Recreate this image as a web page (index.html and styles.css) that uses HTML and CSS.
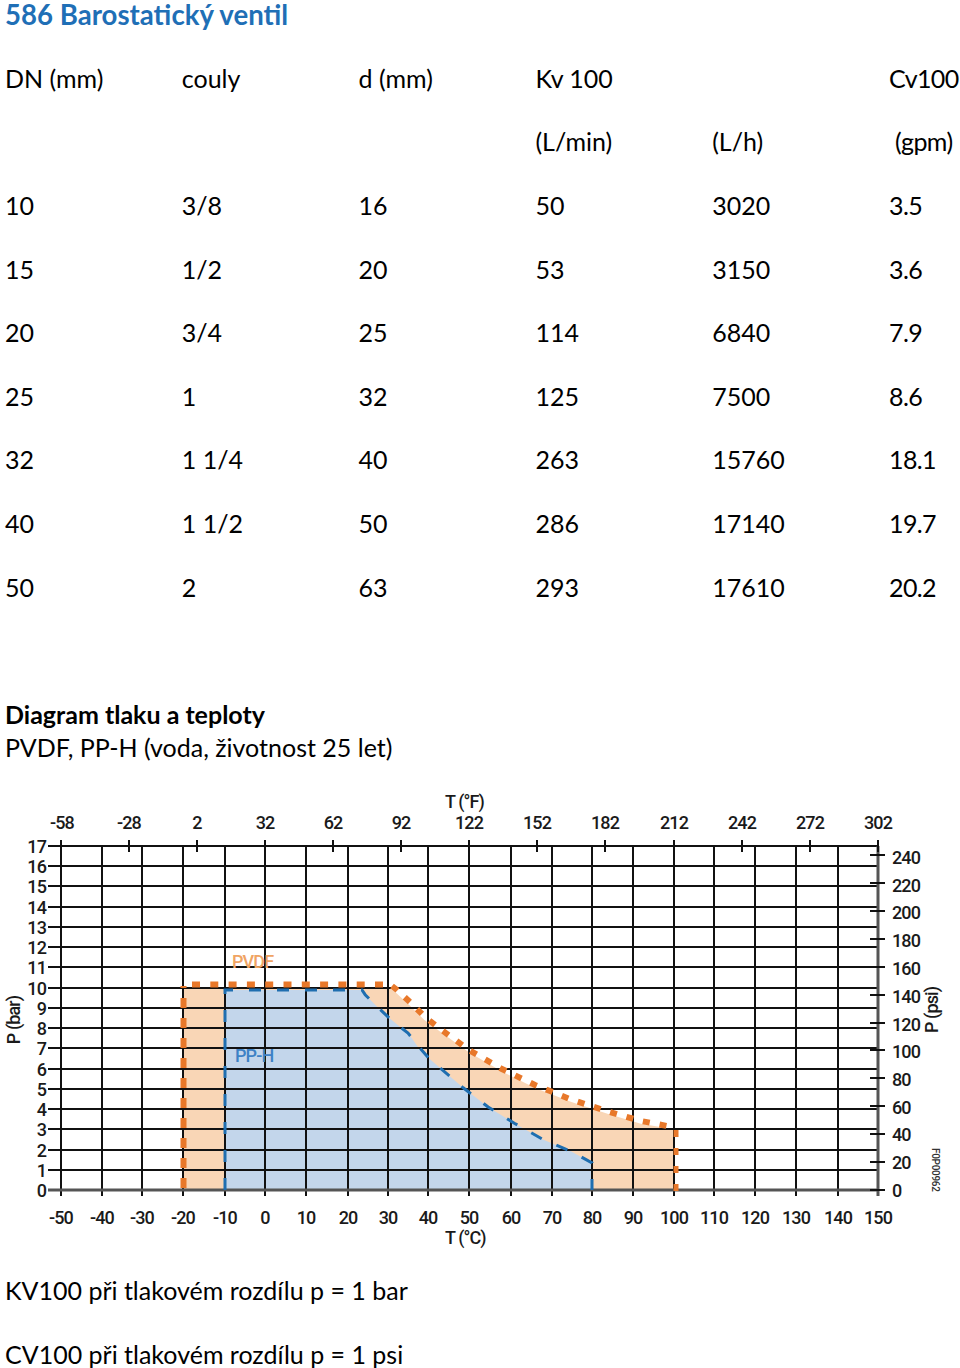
FILE: index.html
```html
<!DOCTYPE html>
<html lang="cs">
<head>
<meta charset="utf-8">
<title>586 Barostatický ventil</title>
<link rel="stylesheet" href="styles.css">
</head>
<body>
<h1 class="title">586 Barostatický ventil</h1>

<table class="specs">
  <colgroup><col><col><col><col><col><col></colgroup>
  <tr><td>DN (mm)</td><td>couly</td><td>d (mm)</td><td>Kv 100</td><td></td><td>Cv100</td></tr>
  <tr><td></td><td></td><td></td><td>(L/min)</td><td>(L/h)</td><td class="shift">(gpm)</td></tr>
  <tr><td>10</td><td>3/8</td><td>16</td><td>50</td><td>3020</td><td>3.5</td></tr>
  <tr><td>15</td><td>1/2</td><td>20</td><td>53</td><td>3150</td><td>3.6</td></tr>
  <tr><td>20</td><td>3/4</td><td>25</td><td>114</td><td>6840</td><td>7.9</td></tr>
  <tr><td>25</td><td>1</td><td>32</td><td>125</td><td>7500</td><td>8.6</td></tr>
  <tr><td>32</td><td>1 1/4</td><td>40</td><td>263</td><td>15760</td><td>18.1</td></tr>
  <tr><td>40</td><td>1 1/2</td><td>50</td><td>286</td><td>17140</td><td>19.7</td></tr>
  <tr><td>50</td><td>2</td><td>63</td><td>293</td><td>17610</td><td>20.2</td></tr>
</table>

<div class="diagram-head">
  <p class="diagram-title">Diagram tlaku a teploty</p>
  <p class="diagram-sub">PVDF, PP-H (voda, životnost 25 let)</p>
</div>

<svg class="chart" width="960" height="470" viewBox="0 785 960 470" xmlns="http://www.w3.org/2000/svg">
  <!-- fills -->
  <polygon class="fill-pvdf" points="183,1190 183,987 388,987 396,992.7 410,1005.8 424.4,1020 440.7,1032.1 469.3,1052.4 502,1071.6 534.7,1087.8 571.4,1102 608.3,1114.1 640.9,1123.8 674,1129.3 674,1190"/>
  <polygon class="fill-pph" points="225,1190 225,990 362,990 365.2,994.7 375.4,1004.9 387.7,1016.7 399.9,1026.7 408,1032.7 417.8,1046.7 428.5,1057.9 463.2,1087.8 488.1,1107 514.3,1123.2 542.9,1139.4 571.4,1151.5 592,1162.9 592,1190"/>

  <!-- grid -->
  <path class="grid" d="M48 1170H878M48 1150H878M48 1129H878M48 1109H878M48 1089H878M48 1069H878M48 1048H878M48 1028H878M48 1008H878M48 988H878M48 967H878M48 947H878M48 927H878M48 907H878M48 886H878M48 866H878M48 846H878"/>
  <path class="grid" d="M61 846V1196M102 846V1196M142 846V1196M183 846V1196M225 846V1196M265 846V1196M306 846V1196M348 846V1196M388 846V1196M428 846V1196M469 846V1196M511 846V1196M552 846V1196M592 846V1196M633 846V1196M674 846V1196M714 846V1196M755 846V1196M796 846V1196M838 846V1196"/>
  <path class="axis" d="M48 1190H878M878 846V1196"/>
  <!-- top °F ticks -->
  <path class="grid" d="M61 840V852M129 840V852M197 840V852M265 840V852M333 840V852M401 840V852M469 840V852M537 840V852M605 840V852M674 840V852M742 840V852M810 840V852M878 840V852"/>
  <!-- right psi ticks -->
  <path class="grid" d="M870 1190H885M870 1162H885M870 1134H885M870 1106H885M870 1078H885M870 1050H885M870 1023H885M870 995H885M870 967H885M870 939H885M870 911H885M870 883H885M870 855H885"/>

  <!-- curves -->
  <path class="dot-pvdf-v" d="M183.5 1188V986"/>
  <path class="dot-pvdf-h" d="M192 984.5H390"/>
  <path class="dot-pvdf-c" d="M392 986 L397 990 L411 1003 L425 1017 L441 1029.5 L469 1050 L502 1069 L535 1085 L571 1099.5 L608 1111.5 L641 1121 L670 1126.5"/>
  <path class="dot-pvdf-r" d="M676 1130V1192"/>
  <path class="dash-pph" d="M225 1190V990H362 L365.2 994.7 L375.4 1004.9 L387.7 1016.7 L399.9 1026.7 L408 1033 L417.8 1045.5 L428.5 1057.9 L463.2 1087.8 L488.1 1107 L514.3 1123.2 L542.9 1139.4 L571.4 1151.5 L592 1162.9 V1190"/>

  <text class="lbl-pvdf" x="232" y="968">PVDF</text>
  <text class="lbl-pph" x="235" y="1062">PP-H</text>

  <!-- left bar labels -->
  <g class="ax ax-end">
    <text x="46" y="1197">0</text>
    <text x="46" y="1177">1</text>
    <text x="46" y="1157">2</text>
    <text x="46" y="1136">3</text>
    <text x="46" y="1116">4</text>
    <text x="46" y="1096">5</text>
    <text x="46" y="1076">6</text>
    <text x="46" y="1055">7</text>
    <text x="46" y="1035">8</text>
    <text x="46" y="1015">9</text>
    <text x="46" y="995">10</text>
    <text x="46" y="974">11</text>
    <text x="46" y="954">12</text>
    <text x="46" y="934">13</text>
    <text x="46" y="914">14</text>
    <text x="46" y="893">15</text>
    <text x="46" y="873">16</text>
    <text x="46" y="853">17</text>
  </g>

  <!-- top °F labels -->
  <g class="ax ax-mid">
    <text x="62" y="829">-58</text>
    <text x="129" y="829">-28</text>
    <text x="197" y="829">2</text>
    <text x="265" y="829">32</text>
    <text x="333" y="829">62</text>
    <text x="401" y="829">92</text>
    <text x="469" y="829">122</text>
    <text x="537" y="829">152</text>
    <text x="605" y="829">182</text>
    <text x="674" y="829">212</text>
    <text x="742" y="829">242</text>
    <text x="810" y="829">272</text>
    <text x="878" y="829">302</text>
  </g>
  <text class="ax" x="445" y="808">T (°F)</text>

  <!-- bottom °C labels -->
  <g class="ax ax-mid">
    <text x="61" y="1224">-50</text>
    <text x="102" y="1224">-40</text>
    <text x="142" y="1224">-30</text>
    <text x="183" y="1224">-20</text>
    <text x="225" y="1224">-10</text>
    <text x="265" y="1224">0</text>
    <text x="306" y="1224">10</text>
    <text x="348" y="1224">20</text>
    <text x="388" y="1224">30</text>
    <text x="428" y="1224">40</text>
    <text x="469" y="1224">50</text>
    <text x="511" y="1224">60</text>
    <text x="552" y="1224">70</text>
    <text x="592" y="1224">80</text>
    <text x="633" y="1224">90</text>
    <text x="674" y="1224">100</text>
    <text x="714" y="1224">110</text>
    <text x="755" y="1224">120</text>
    <text x="796" y="1224">130</text>
    <text x="838" y="1224">140</text>
    <text x="878" y="1224">150</text>
  </g>
  <text class="ax" x="445" y="1244">T (°C)</text>

  <!-- right psi labels -->
  <g class="ax">
    <text x="892" y="1197">0</text>
    <text x="892" y="1169">20</text>
    <text x="892" y="1141">40</text>
    <text x="892" y="1114">60</text>
    <text x="892" y="1086">80</text>
    <text x="892" y="1058">100</text>
    <text x="892" y="1031">120</text>
    <text x="892" y="1003">140</text>
    <text x="892" y="975">160</text>
    <text x="892" y="947">180</text>
    <text x="892" y="919">200</text>
    <text x="892" y="892">220</text>
    <text x="892" y="864">240</text>
  </g>

  <text class="ax ax-mid" transform="translate(20 1020) rotate(-90)">P (bar)</text>
  <text class="ax ax-mid" transform="translate(938 1010) rotate(-90)">P (psi)</text>
  <text class="code" transform="translate(932 1148) rotate(90)">F0P00962</text>
</svg>

<div class="notes">
  <p>KV100 při tlakovém rozdílu p = 1 bar</p>
  <p>CV100 při tlakovém rozdílu p = 1 psi</p>
</div>
</body>
</html>
```

FILE: styles.css
```css
html, body {
  margin: 0;
  padding: 0;
  background: #ffffff;
}

body {
  font-family: Lato, "Open Sans", "Liberation Sans", sans-serif;
  color: #000;
  width: 960px;
}

.title {
  margin: 0;
  padding-left: 5px;
  font-size: 27.6px;
  line-height: 29px;
  font-weight: 700;
  color: #1f6fb6;
  white-space: nowrap;
}

.specs {
  margin-top: 17px;
  margin-left: 5px;
  border-collapse: collapse;
  table-layout: fixed;
  width: 955px;
  font-size: 25px;
}

.specs col {
  width: 176.8px;
}

.specs col:last-child {
  width: 71px;
}

.specs td {
  padding: 0;
  height: 63.6px;
  vertical-align: middle;
  white-space: nowrap;
}

.specs td:last-child {
  letter-spacing: -0.6px;
}

.specs td.shift {
  padding-left: 6px;
}

.diagram-head {
  margin-top: 80px;
  padding-left: 5px;
  font-size: 25px;
}

.diagram-head p {
  margin: 0;
  line-height: 33px;
}

.diagram-title {
  font-weight: 700;
}

.chart {
  display: block;
  margin-top: 21px;
}

.chart .fill-pvdf {
  fill: #f9d6b6;
}

.chart .fill-pph {
  fill: #c3d6eb;
}

.chart .grid {
  stroke: #111;
  stroke-width: 2;
  fill: none;
}

.chart .axis {
  stroke: #555;
  stroke-width: 3;
  fill: none;
}

.chart .dot-pvdf-v,
.chart .dot-pvdf-h,
.chart .dot-pvdf-c,
.chart .dot-pvdf-r {
  fill: none;
  stroke: #e8782a;
}

.chart .dot-pvdf-v {
  stroke-width: 6;
  stroke-dasharray: 10 10;
}

.chart .dot-pvdf-h {
  stroke-width: 6;
  stroke-dasharray: 8 10.3;
}

.chart .dot-pvdf-c {
  stroke-width: 6;
  stroke-dasharray: 7 10;
}

.chart .dot-pvdf-r {
  stroke-width: 5;
  stroke-dasharray: 7 11;
}

.chart .dash-pph {
  fill: none;
  stroke: #1f6eb0;
  stroke-width: 3;
  stroke-dasharray: 12 16;
}

.chart text {
  font-family: Roboto, "DejaVu Sans", sans-serif;
  font-weight: 500;
  font-size: 18px;
  letter-spacing: -0.9px;
  fill: #1a1a1a;
}

.chart .ax-end text {
  text-anchor: end;
}

.chart .ax-mid,
.chart .ax-mid text {
  text-anchor: middle;
}

.chart .lbl-pvdf {
  fill: #f0a463;
}

.chart .lbl-pph {
  fill: #3d82c6;
}

.chart .code {
  font-size: 10px;
  letter-spacing: -0.3px;
  fill: #333;
}

.notes {
  margin-top: 3px;
  padding-left: 5px;
  font-size: 25px;
}

.notes p {
  margin: 0;
  line-height: 64px;
}
```
